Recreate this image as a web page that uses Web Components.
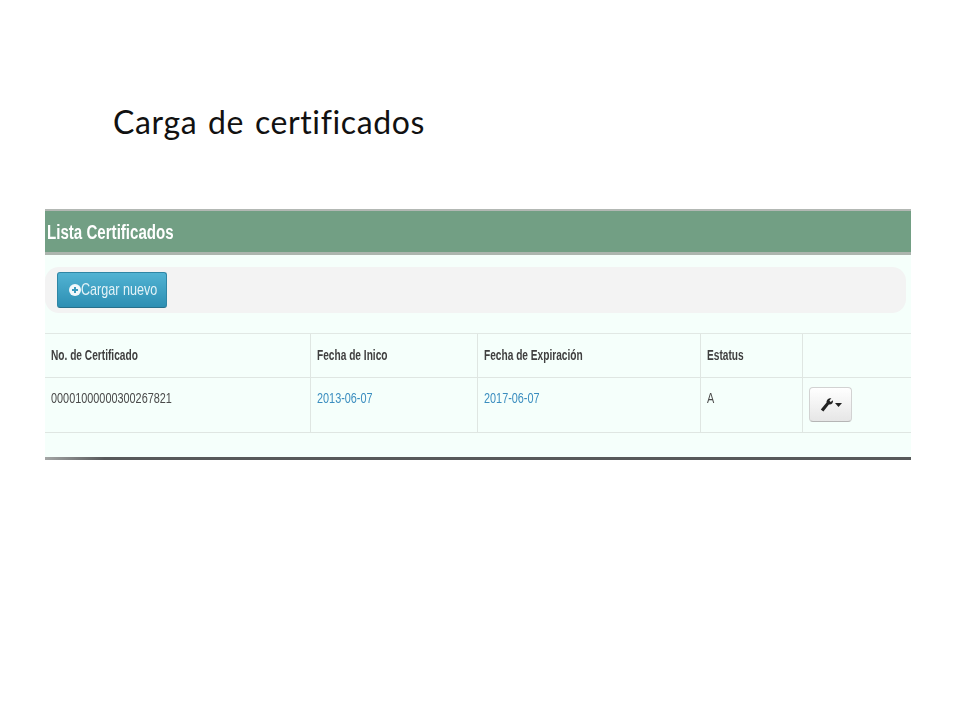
<!DOCTYPE html>
<html lang="es">
<head>
<meta charset="utf-8">
<title>Carga de certificados</title>
<style>
  html, body { margin: 0; padding: 0; background: #fff; }
  body { width: 960px; height: 720px; overflow: hidden; font-family: "Liberation Sans", Arial, sans-serif; }
</style>
</head>
<body>
<slide-page>
  <span slot="title">Carga de certificados</span>
  <cert-panel heading="Lista Certificados">
    <upload-button slot="toolbar">Cargar nuevo</upload-button>
    <cert-table></cert-table>
  </cert-panel>
</slide-page>

<script>
// narrow text: the reference is a horizontally squeezed screenshot
class SqueezedText extends HTMLElement {
  constructor() {
    super();
    this.shadowDOM = this.attachShadow({ mode: 'open' });
    this.shadowDOM.innerHTML = `
      <style>
        :host { display: block; width: 0; white-space: nowrap; }
        span { display: inline-block; transform-origin: 0 50%; transform: scaleX(var(--squeeze, .85)); }
      </style>
      <span><slot></slot></span>
    `;
  }
}

class SlidePage extends HTMLElement {
  constructor() {
    super();
    this.shadowDOM = this.attachShadow({ mode: 'open' });
    this.shadowDOM.innerHTML = `
      <style>
        :host { display: block; padding: 0 49px 0 45px; }
        h1 {
          margin: 0;
          padding: 101px 0 0 68px;
          height: 209px;
          box-sizing: border-box;
          font: 400 32px/42px Lato, "Open Sans", sans-serif;
          font-variant-ligatures: none;
          letter-spacing: .62px;
          word-spacing: 2px;
          color: #111;
          white-space: nowrap;
        }
      </style>
      <h1><slot name="title"></slot></h1>
      <slot></slot>
    `;
  }
}

class CertPanel extends HTMLElement {
  constructor() {
    super();
    this.shadowDOM = this.attachShadow({ mode: 'open' });
    this.shadowDOM.innerHTML = `
      <style>
        :host {
          display: block;
          height: 251px;
          box-sizing: border-box;
          background: #f5fffb;
          border-bottom: 3px solid;
          border-image: linear-gradient(90deg, #a5a8a7, #57595a 7%) 1;
          filter: blur(.35px);
        }
        header {
          height: 46px;
          box-sizing: border-box;
          background: #729f84;
          border-top: 2px solid #b3b8b4;
          border-bottom: 3px solid #acb5ae;
          padding: 11px 0 0 2px;
          color: #fff;
          font: 700 20px/20px "Liberation Sans", Arial, sans-serif;
          --squeeze: .755;
        }
        .well {
          margin: 12px 5px 20px 0;
          height: 46px;
          box-sizing: border-box;
          background: #f3f3f3;
          border-radius: 14px;
          padding: 5px 0 0 12px;
        }
      </style>
      <header><squeezed-text></squeezed-text></header>
      <div class="well"><slot name="toolbar"></slot></div>
      <slot></slot>
    `;
    this.shadowDOM.querySelector('squeezed-text').textContent = this.getAttribute('heading');
  }
}

class UploadButton extends HTMLElement {
  constructor() {
    super();
    this.shadowDOM = this.attachShadow({ mode: 'open' });
    this.shadowDOM.innerHTML = `
      <style>
        :host {
          display: flex;
          align-items: center;
          width: 110px;
          height: 36px;
          box-sizing: border-box;
          padding-left: 11px;
          gap: 0;
          border-radius: 3px;
          background: linear-gradient(#52b3d3, #2d8fb3);
          border: 1px solid #2f86a5;
          border-bottom-color: #27708b;
          color: #e3f2f7;
          font: 400 17px/18px "Liberation Sans", Arial, sans-serif;
          --squeeze: .74;
        }
        svg { flex: none; width: 12px; height: 12px; }
      </style>
      <svg viewBox="0 0 12 12">
        <circle cx="6" cy="6" r="6" fill="#f2f8fb"/>
        <path d="M6 3v6M3 6h6" stroke="#3a9abd" stroke-width="2"/>
      </svg>
      <squeezed-text><slot></slot></squeezed-text>
    `;
  }
}

class ToolsButton extends HTMLElement {
  constructor() {
    super();
    this.shadowDOM = this.attachShadow({ mode: 'open' });
    this.shadowDOM.innerHTML = `
      <style>
        :host {
          display: flex;
          align-items: center;
          justify-content: center;
          width: 43px;
          height: 35px;
          box-sizing: border-box;
          border-radius: 4px;
          background: linear-gradient(#ffffff, #e6e6e6);
          border: 1px solid #d2d2d2;
          border-bottom-color: #b5b5b5;
          gap: 1px;
        }
      </style>
      <svg width="14" height="15" viewBox="0 0 14 15">
        <path d="M.8 12.6 6.6 5.6C6.2 3 8.2 1 11.4 1.2L9.4 3.6 10.6 5 13 3.2C13.4 6 11.2 8 8.9 7.5L3.4 14.4Z" fill="#222"/>
      </svg>
      <svg width="7" height="4" viewBox="0 0 7 4"><path d="M0 0h7L3.5 4Z" fill="#222"/></svg>
    `;
  }
}

class CertTable extends HTMLElement {
  constructor() {
    super();
    this.shadowDOM = this.attachShadow({ mode: 'open' });
    const cols = ['No. de Certificado', 'Fecha de Inico', 'Fecha de Expiración', 'Estatus', ''];
    const row = { cert: '00001000000300267821', start: '2013-06-07', end: '2017-06-07', status: 'A' };
    this.shadowDOM.innerHTML = `
      <style>
        :host {
          display: grid;
          grid-template-columns: 265px 167px 223px 102px 109px;
          grid-template-rows: 44px 55px;
          border-top: 1px solid #e1e8e4;
          color: #4a4a4a;
          font: 400 14px/16px "Liberation Sans", Arial, sans-serif;
          --squeeze: .776;
        }
        div {
          box-sizing: border-box;
          padding: 13px 0 0 6px;
          border-left: 1px solid #dfe6e2;
          border-bottom: 1px solid #dfe6e2;
        }
        .first { border-left: 0; padding-left: 6px; }
        .head { font-weight: 700; color: #3f3f3f; --squeeze: .725; }
        .cell { padding-top: 12px; }
        a { color: #3a8dbf; text-decoration: none; }
        .tools { padding: 9px 0 0 6px; }
      </style>
      ${cols.map((c, i) => `<div class="head ${i ? '' : 'first'}"><squeezed-text>${c}</squeezed-text></div>`).join('')}
      <div class="cell first"><squeezed-text>${row.cert}</squeezed-text></div>
      <div class="cell"><squeezed-text><a href="#">${row.start}</a></squeezed-text></div>
      <div class="cell"><squeezed-text><a href="#">${row.end}</a></squeezed-text></div>
      <div class="cell"><squeezed-text>${row.status}</squeezed-text></div>
      <div class="tools"><tools-button></tools-button></div>
    `;
  }
}

customElements.define('squeezed-text', SqueezedText);
customElements.define('slide-page', SlidePage);
customElements.define('cert-panel', CertPanel);
customElements.define('upload-button', UploadButton);
customElements.define('tools-button', ToolsButton);
customElements.define('cert-table', CertTable);
</script>
</body>
</html>
